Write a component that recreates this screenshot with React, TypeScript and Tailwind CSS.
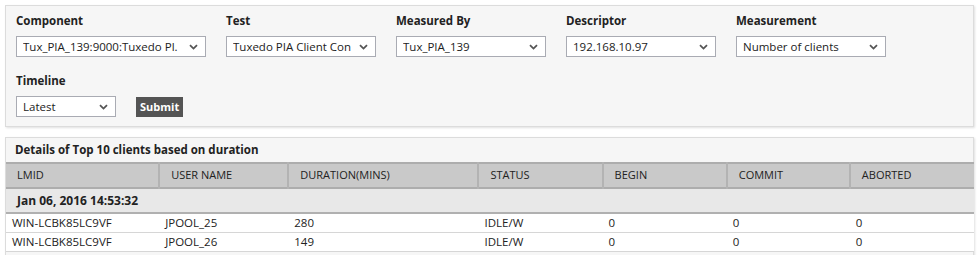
import { ReactNode } from 'react';

/* ─── Filter field ─── */

function Chevron() {
  return (
    <svg width="9" height="6" viewBox="0 0 9 6" className="shrink-0">
      <path d="M1 1.2 L4.5 4.6 L8 1.2" fill="none" stroke="#555" strokeWidth="1.8" />
    </svg>
  );
}

function Field({ label, value, width }: { label: string; value: string; width: string }) {
  return (
    <div className="flex flex-col">
      <span className="text-[11.5px] leading-[16px] font-bold text-[#222]">{label}</span>
      <div
        className={`mt-[7px] h-[21px] ${width} flex items-center justify-between bg-white border border-[#a9abb3] pl-[6px] pr-[7px]`}
      >
        <span className="text-[11.5px] text-[#222] whitespace-nowrap overflow-hidden">{value}</span>
        <Chevron />
      </div>
    </div>
  );
}

/* ─── Table pieces ─── */

const COLUMNS = [
  { name: 'LMID', w: 'w-[153px]' },
  { name: 'USER NAME', w: 'w-[129px]' },
  { name: 'DURATION(MINS)', w: 'w-[190px]' },
  { name: 'STATUS', w: 'w-[124px]' },
  { name: 'BEGIN', w: 'w-[124px]' },
  { name: 'COMMIT', w: 'w-[123px]' },
  { name: 'ABORTED', w: 'w-[124px]' },
];

const ROWS = [
  ['WIN-LCBK85LC9VF', 'JPOOL_25', '280', 'IDLE/W', '0', '0', '0'],
  ['WIN-LCBK85LC9VF', 'JPOOL_26', '149', 'IDLE/W', '0', '0', '0'],
];

function Panel({ children, className = '' }: { children: ReactNode; className?: string }) {
  return (
    <div
      className={`ml-[5px] w-[969px] bg-[#f6f6f6] border border-[#dcdcdc] shadow-[1px_1px_2px_rgba(0,0,0,0.12)] ${className}`}
    >
      {children}
    </div>
  );
}

export default function App() {
  return (
    <div className="w-[978px] h-[255px] overflow-hidden bg-white pt-[5px]" style={{ fontFamily: '"Open Sans", "Liberation Sans", sans-serif' }}>
      {/* Filters */}
      <Panel className="pl-[10px] pt-[7px] pb-[9px]">
        <div className="flex gap-[20px]">
          <Field label="Component" value="Tux_PIA_139:9000:Tuxedo Pl." width="w-[190px]" />
          <Field label="Test" value="Tuxedo PIA Client Con" width="w-[150px]" />
          <Field label="Measured By" value="Tux_PIA_139" width="w-[150px]" />
          <Field label="Descriptor" value="192.168.10.97" width="w-[150px]" />
          <Field label="Measurement" value="Number of clients" width="w-[150px]" />
        </div>
        <div className="flex items-end gap-[20px] mt-[16px]">
          <Field label="Timeline" value="Latest" width="w-[100px]" />
          <button className="h-[20px] px-[4px] bg-[#545454] text-white text-[11px] font-bold leading-[20px]">
            Submit
          </button>
        </div>
      </Panel>

      {/* Details table */}
      <Panel className="mt-[10px] pb-[10px]">
        <div className="h-[24px] pl-[9px] flex items-center text-[11.5px] font-bold text-[#222]">
          Details of Top 10 clients based on duration
        </div>
        <table className="w-[968px] border-collapse table-fixed text-[11px] text-[#222]">
          <thead>
            <tr className="bg-[#c9c9c9] h-[25px] border-t-2 border-b-2 border-[#adadad]">
              {COLUMNS.map((c) => (
                <th
                  key={c.name}
                  className={`${c.w} text-left font-normal pl-[11px] border-r-2 border-[#b3b3b3] last:border-r-0`}
                >
                  {c.name}
                </th>
              ))}
            </tr>
          </thead>
          <tbody className="bg-white">
            <tr className="bg-[#e8e8e8] h-[25px] border-b-2 border-[#b0b0b0]">
              <td colSpan={7} className="pl-[11px] font-bold text-[12px]">
                Jan 06, 2016 14:53:32
              </td>
            </tr>
            {ROWS.map((r, i) => (
              <tr key={i} className="h-[19px] border-b border-[#d6d6d6]">
                {r.map((cell, j) => (
                  <td key={j} className="pl-[6px] whitespace-nowrap text-[11.5px]">
                    {cell}
                  </td>
                ))}
              </tr>
            ))}
          </tbody>
        </table>
      </Panel>
    </div>
  );
}
